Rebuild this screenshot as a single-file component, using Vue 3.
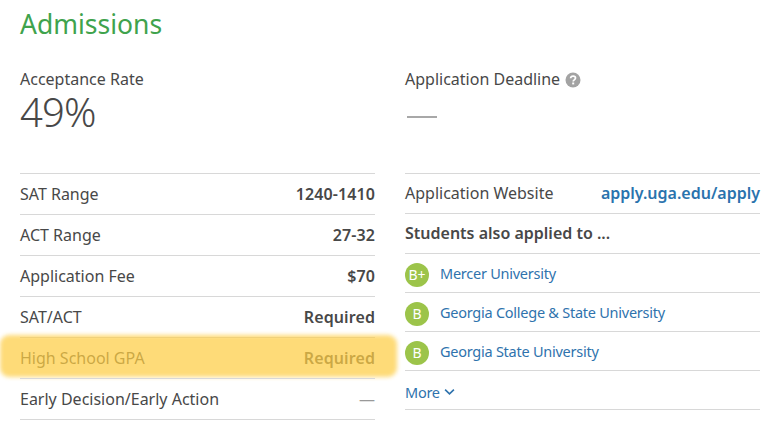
<template>
  <div class="page">
    <h2 class="title">Admissions</h2>
    <div class="columns">
      <div class="col">
        <div class="fact">
          <div class="fact-label">Acceptance Rate</div>
          <div class="fact-value">49%</div>
        </div>
        <div
          v-for="row in leftRows"
          :key="row.label"
          class="row"
          :class="{ highlighted: row.highlight }"
        >
          <span>{{ row.label }}</span>
          <span class="row-value" :class="{ dash: row.value === '—' }">{{ row.value }}</span>
        </div>
      </div>
      <div class="col">
        <div class="fact">
          <div class="fact-label">
            Application Deadline
            <svg class="help" viewBox="0 0 16 16" width="16" height="16">
              <circle cx="8" cy="8" r="7.5" fill="#a3a3a3" />
              <path d="M5.6 6.3C5.7 4.9 6.7 4.1 8.1 4.1C9.5 4.1 10.5 4.9 10.5 6.1C10.5 7.9 8.2 7.8 8.2 9.5" fill="none" stroke="#fff" stroke-width="1.7" />
              <rect x="7.2" y="10.5" width="2" height="1.9" fill="#fff" />
            </svg>
          </div>
          <div class="deadline-dash"></div>
        </div>
        <div class="row short">
          <span class="nudge">Application Website</span>
          <a class="row-value link nudge">apply.uga.edu/apply</a>
        </div>
        <div class="row short also"><span class="nudge">Students also applied to ...</span></div>
        <div v-for="school in schools" :key="school.name" class="school">
          <span class="grade">{{ school.grade }}</span>
          <a class="school-name">{{ school.name }}</a>
        </div>
        <div class="more">
          More
          <svg viewBox="0 0 12 8" width="11" height="8">
            <path d="M1.2 1.5L6 6L10.8 1.5" fill="none" stroke="#2f73ad" stroke-width="1.8" />
          </svg>
        </div>
      </div>
    </div>
  </div>
</template>

<script setup>
const leftRows = [
  { label: 'SAT Range', value: '1240-1410' },
  { label: 'ACT Range', value: '27-32' },
  { label: 'Application Fee', value: '$70' },
  { label: 'SAT/ACT', value: 'Required' },
  { label: 'High School GPA', value: 'Required', highlight: true },
  { label: 'Early Decision/Early Action', value: '—' }
]

const schools = [
  { grade: 'B+', name: 'Mercer University' },
  { grade: 'B', name: 'Georgia College & State University' },
  { grade: 'B', name: 'Georgia State University' }
]
</script>

<style scoped>
.page {
  width: 781px;
  height: 441px;
  overflow: hidden;
  background: #fff;
  color: #484848;
  font-family: "Noto Sans", "Open Sans", sans-serif;
  font-size: 16px;
  box-sizing: border-box;
  padding: 0 21px 0 20px;
}

.title {
  margin: 0;
  padding-top: 6px;
  height: 58px;
  box-sizing: border-box;
  font-size: 26.5px;
  line-height: 36px;
  font-weight: 400;
  color: #3fa34d;
}

.columns {
  display: flex;
  gap: 30px;
}

.col {
  flex: 1;
  min-width: 0;
}

.fact {
  height: 115px;
  padding-top: 10px;
  box-sizing: border-box;
}

.fact-label {
  display: flex;
  align-items: center;
  gap: 5px;
  line-height: 22px;
}

.fact-value {
  font-size: 40px;
  font-weight: 300;
  line-height: 44px;
  letter-spacing: -0.8px;
}

.help {
  margin-top: 2px;
}

.deadline-dash {
  width: 30px;
  height: 2px;
  margin: 26px 0 0 2px;
  background: #a8a8a8;
}

.row {
  position: relative;
  height: 41px;
  display: flex;
  justify-content: space-between;
  align-items: center;
  border-top: 1px solid #d8d8d8;
  box-sizing: border-box;
}

.row:last-child {
  height: 42px;
  border-bottom: 1px solid #d8d8d8;
}

.row.short {
  height: 40px;
}

.nudge {
  margin-top: -2px;
}

.row-value {
  font-weight: 600;
  letter-spacing: 0.1px;
  color: #484848;
}

.row-value.dash {
  font-weight: 400;
  color: #999;
}

.link {
  letter-spacing: 0;
  color: #2a73ad;
}

.also {
  font-weight: 600;
}

.highlighted::after {
  content: "";
  position: absolute;
  left: -20px;
  right: -22px;
  top: -3px;
  bottom: 1px;
  border-radius: 9px;
  background: rgba(253, 205, 68, 0.72);
  filter: blur(2px);
}

.school {
  height: 39px;
  display: flex;
  align-items: center;
  gap: 11px;
  border-top: 1px solid #d8d8d8;
  box-sizing: border-box;
}

.grade {
  width: 24px;
  height: 24px;
  margin-top: 3px;
  border-radius: 50%;
  background: #9cc44a;
  color: #fff;
  font-size: 14px;
  display: flex;
  align-items: center;
  justify-content: center;
  flex-shrink: 0;
}

.school-name {
  color: #2f73ad;
  font-size: 14.5px;
  letter-spacing: -0.25px;
}

.more {
  height: 40px;
  padding-top: 3px;
  display: flex;
  align-items: center;
  gap: 4px;
  border-top: 1px solid #d8d8d8;
  border-bottom: 1px solid #d8d8d8;
  box-sizing: border-box;
  color: #2f73ad;
  font-size: 14.5px;
  letter-spacing: -0.25px;
}
</style>
